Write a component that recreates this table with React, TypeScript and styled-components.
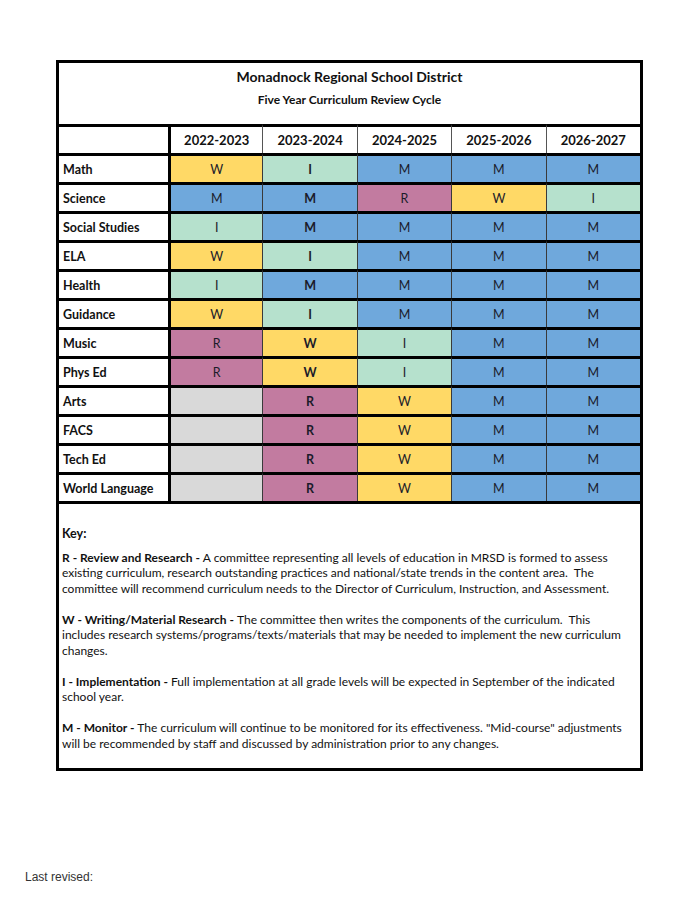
import React from "react";
import styled, { createGlobalStyle } from "styled-components";

const Global = createGlobalStyle`
  html, body { margin: 0; padding: 0; background: #fff; }
  body { font-family: Lato, "Open Sans", sans-serif; color: #111; }
`;

const Page = styled.div`
  width: 700px;
  height: 905px;
  box-sizing: border-box;
  padding: 60px 0 0 56px;
  display: flex;
  flex-direction: column;
`;

const Frame = styled.div`
  width: 587px;
  box-sizing: border-box;
  border: 3px solid #000;
  display: flex;
  flex-direction: column;
`;

const Table = styled.table`
  width: 100%;
  border-collapse: separate;
  border-spacing: 0;
  table-layout: fixed;
`;

const TitleCell = styled.td`
  height: 61px;
  padding: 0;
  text-align: center;
  vertical-align: top;
`;

const Title = styled.div`
  font-size: 14px;
  font-weight: 700;
  margin-top: 5px;
  line-height: 18px;
`;

const Subtitle = styled.div`
  font-size: 12px;
  font-weight: 700;
  margin-top: 6px;
  line-height: 16px;
`;

const Row = styled.tr``;

const LabelCell = styled.td`
  height: 26px;
  padding: 0 0 0 4px;
  border-top: 3px solid #000;
  font-size: 12.5px;
  font-weight: 700;
  white-space: nowrap;
  vertical-align: middle;
`;

const HeadCell = styled.td<{ $first?: boolean }>`
  height: 26px;
  padding: 0;
  border-top: 3px solid #000;
  border-left: ${(p) => (p.$first ? "3px solid #000" : "1px solid #555")};
  text-align: center;
  font-size: 13px;
  font-weight: 700;
  vertical-align: middle;
`;

const colors: Record<string, string> = {
  W: "#ffd966",
  I: "#b6e1cd",
  M: "#6fa8dc",
  R: "#c27ba0",
  "": "#d9d9d9",
};

const DataCell = styled.td<{ $code: string; $first?: boolean; $strong?: boolean }>`
  height: 26px;
  padding: 0;
  border-top: 3px solid #000;
  border-left: ${(p) => (p.$first ? "3px solid #000" : "1px solid #3a3a3a")};
  background: ${(p) => colors[p.$code]};
  text-align: center;
  font-size: 12.5px;
  font-weight: ${(p) => (p.$strong ? 700 : 400)};
  color: #1b1b2a;
  vertical-align: middle;
`;

const Key = styled.div`
  border-top: 3px solid #000;
  height: 267px;
  box-sizing: border-box;
  padding: 22px 4px 0 3px;
  font-size: 12px;
  line-height: 15.5px;
`;

const KeyTitle = styled.div`
  font-size: 12.5px;
  font-weight: 700;
  margin-bottom: 8px;
`;

const KeyPara = styled.p`
  margin: 0 0 15.5px 0;
`;

const Term = styled.b`
  font-weight: 700;
`;

const Footer = styled.div`
  margin: 99px 0 0 -31px;
  font-family: "Liberation Sans", Arial, sans-serif;
  font-size: 12px;
  color: #333;
`;

const years = ["2022-2023", "2023-2024", "2024-2025", "2025-2026", "2026-2027"];

const data: [string, string[]][] = [
  ["Math", ["W", "I", "M", "M", "M"]],
  ["Science", ["M", "M", "R", "W", "I"]],
  ["Social Studies", ["I", "M", "M", "M", "M"]],
  ["ELA", ["W", "I", "M", "M", "M"]],
  ["Health", ["I", "M", "M", "M", "M"]],
  ["Guidance", ["W", "I", "M", "M", "M"]],
  ["Music", ["R", "W", "I", "M", "M"]],
  ["Phys Ed", ["R", "W", "I", "M", "M"]],
  ["Arts", ["", "R", "W", "M", "M"]],
  ["FACS", ["", "R", "W", "M", "M"]],
  ["Tech Ed", ["", "R", "W", "M", "M"]],
  ["World Language", ["", "R", "W", "M", "M"]],
];

export default function App() {
  return (
    <>
      <Global />
      <Page>
        <Frame>
          <Table>
            <colgroup>
              <col style={{ width: 109 }} />
              <col />
              <col />
              <col />
              <col />
              <col />
            </colgroup>
            <tbody>
              <tr>
                <TitleCell colSpan={6}>
                  <Title>Monadnock Regional School District</Title>
                  <Subtitle>Five Year Curriculum Review Cycle</Subtitle>
                </TitleCell>
              </tr>
              <Row>
                <LabelCell />
                {years.map((y, i) => (
                  <HeadCell key={y} $first={i === 0}>
                    {y}
                  </HeadCell>
                ))}
              </Row>
              {data.map(([name, codes]) => (
                <Row key={name}>
                  <LabelCell>{name}</LabelCell>
                  {codes.map((c, i) => (
                    <DataCell key={i} $code={c} $first={i === 0} $strong={i === 1}>
                      {c}
                    </DataCell>
                  ))}
                </Row>
              ))}
            </tbody>
          </Table>
          <Key>
            <KeyTitle>Key:</KeyTitle>
            <KeyPara>
              <Term>R - Review and Research - </Term>A committee representing all levels of education in MRSD is formed to assess
              <br />
              existing curriculum, research outstanding practices and national/state trends in the content area.&nbsp; The
              <br />
              committee will recommend curriculum needs to the Director of Curriculum, Instruction, and Assessment.
            </KeyPara>
            <KeyPara>
              <Term>W - Writing/Material Research - </Term>The committee then writes the components of the curriculum.&nbsp; This
              <br />
              includes research systems/programs/texts/materials that may be needed to implement the new curriculum
              <br />
              changes.
            </KeyPara>
            <KeyPara>
              <Term>I - Implementation - </Term>Full implementation at all grade levels will be expected in September of the indicated
              <br />
              school year.
            </KeyPara>
            <KeyPara>
              <Term>M - Monitor - </Term>The curriculum will continue to be monitored for its effectiveness. "Mid-course" adjustments
              <br />
              will be recommended by staff and discussed by administration prior to any changes.
            </KeyPara>
          </Key>
        </Frame>
        <Footer>Last revised:</Footer>
      </Page>
    </>
  );
}
